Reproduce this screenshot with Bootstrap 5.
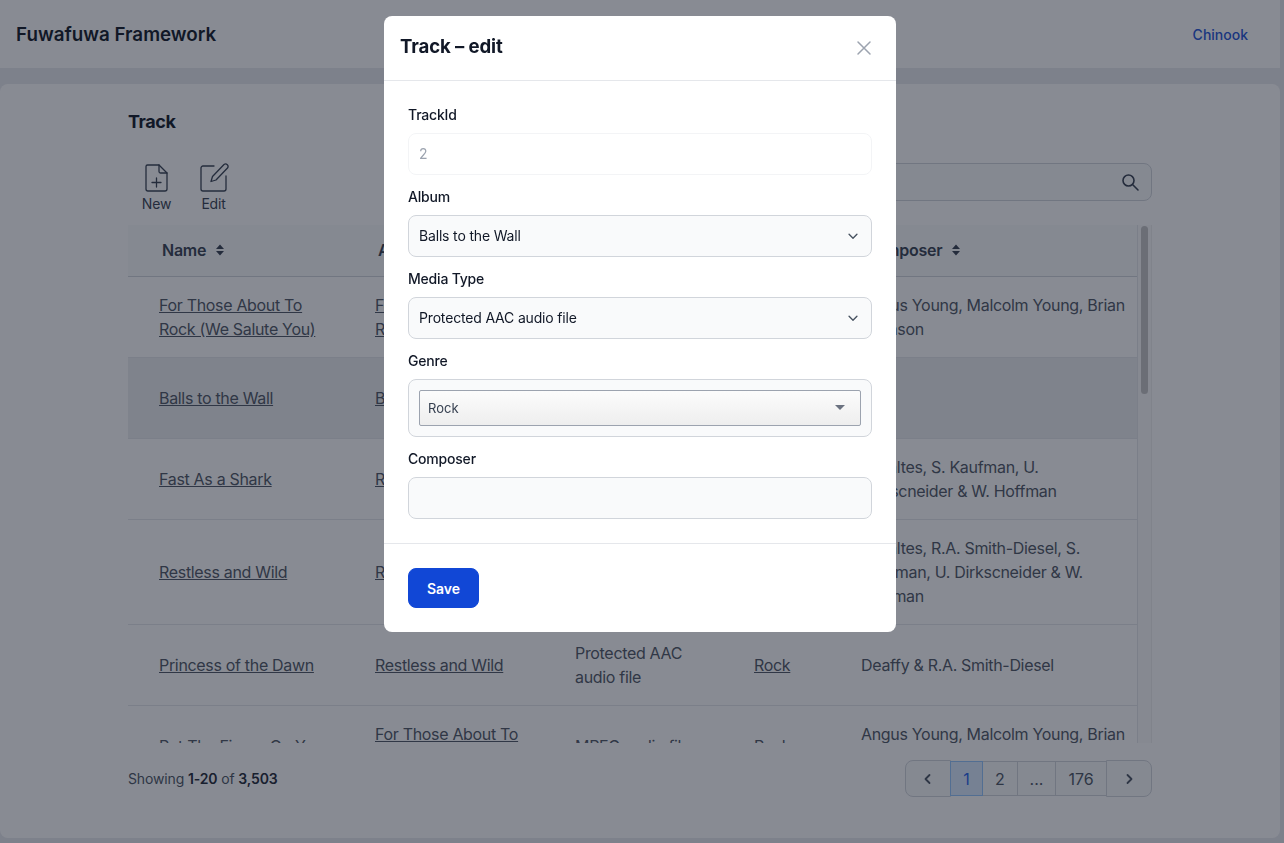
<!DOCTYPE html>
<html lang="en">
  <head>
    <meta charset="UTF-8" />
    <meta name="viewport" content="width=device-width, initial-scale=1.0" />
    <title>Fuwafuwa Framework</title>
    <link
      href="https://cdn.jsdelivr.net/npm/bootstrap@5.3.0/dist/css/bootstrap.min.css"
      rel="stylesheet"
    />
    <style>
      html,
      body {
        height: 100%;
        overflow: hidden;
      }
      body {
        background-color: #e9eaee;
        font-family: Inter, "Liberation Sans", sans-serif;
        color: #111827;
      }
      .top-bar {
        height: 68px;
        padding: 0 32px 0 16px;
        background-color: #fff;
        margin-right: 4px;
      }
      .brand-name {
        font-size: 18.8px;
        font-weight: 600;
        padding-top: 2px;
        color: #111827;
      }
      .app-link {
        font-size: 14px;
        font-weight: 500;
        color: #2454d6;
        text-decoration: none;
      }
      .main-panel {
        height: 754px;
        margin: 16px 4px 0 0;
        padding: 20px 128px 0;
        background-color: #fff;
        border-radius: 8px;
      }
      .panel-title {
        font-size: 18px;
        font-weight: 700;
        line-height: 36px;
        letter-spacing: -0.4px;
        margin: 0;
      }
      .tool-row {
        height: 62px;
        margin-top: 17px;
      }
      .tool-btn {
        width: 57px;
        font-size: 14px;
        line-height: 20px;
        letter-spacing: -0.2px;
        color: #374151;
        text-align: center;
      }
      .tool-btn svg {
        display: block;
        margin: 0 auto 1px;
      }
      .search-box {
        width: 400px;
        height: 38px;
        border: 1px solid #d1d5db;
        border-radius: 8px;
        background-color: #f9fafb;
        padding-right: 11px;
        color: #374151;
        margin-top: -12px;
      }
      .table-frame {
        height: 518px;
        margin-top: 6px;
      }
      .table-scroll {
        flex: 1 1 0;
        min-width: 0;
        overflow: hidden;
      }
      .bar-track {
        flex: 0 0 15px;
        padding: 1px 3px 0 3px;
        background-color: #fafafa;
        border-left: 1px solid #e5e7eb;
        border-right: 1px solid #eeeeee;
      }
      .bar-thumb {
        height: 168px;
        background-color: #c4c4c4;
        border-radius: 4px;
      }
      .track-table {
        --bs-table-color: #4f5764;
        --bs-table-border-color: #e5e7eb;
        font-size: 16px;
        line-height: 24px;
        letter-spacing: -0.32px;
        margin: 0;
        table-layout: fixed;
      }
      .track-table th {
        height: 51px;
        padding: 0 0 0 34px;
        --bs-table-bg: #f9fafb;
        font-weight: 600;
        letter-spacing: -0.25px;
        color: #374151;
        border-bottom: 1px solid #d1d5db;
        vertical-align: middle;
      }
      .track-table td {
        padding: 16px 10px 16px 31px;
        vertical-align: middle;
      }
      .track-table td a {
        color: #4f5764;
      }
      .track-table tr.row-picked td {
        --bs-table-bg: #edeef0;
      }
      .sort-mark {
        margin-left: 8px;
        vertical-align: 0;
      }
      .list-foot {
        height: 71px;
      }
      .show-count {
        font-size: 14px;
        letter-spacing: -0.14px;
        color: #4b5563;
      }
      .show-count b {
        font-weight: 600;
        color: #1f2937;
      }
      .page-nav {
        --bs-pagination-border-radius: 8px;
        align-items: center;
      }
      .page-nav .page-link {
        height: 35px;
        padding: 0;
        display: flex;
        align-items: center;
        justify-content: center;
        font-size: 16px;
        color: #4b5563;
        background-color: #f9fafb;
        border-color: #d1d5db;
      }
      .page-nav .page-item.active .page-link {
        background-color: #dbeafe;
        border-color: #93c5fd;
        color: #2563eb;
        z-index: 2;
      }
      .page-nav .page-link.page-wide {
        width: 46px;
        height: 37px;
      }
      .page-one {
        width: 33px;
      }
      .page-num {
        width: 36px;
      }
      .page-more {
        width: 39px;
      }
      .page-long {
        width: 52px;
      }
      .modal-backdrop.show {
        background-color: #111827;
        opacity: 0.5;
      }
      .edit-modal {
        padding-right: 4px;
      }
      .edit-dialog {
        max-width: 512px;
        margin: 16px auto;
      }
      .edit-dialog .modal-content {
        border: 0;
        border-radius: 8px;
      }
      .edit-dialog .modal-header {
        height: 65px;
        padding: 0 24px 0 16px;
        border-bottom: 1px solid #e5e7eb;
      }
      .edit-dialog .modal-title {
        font-size: 18.6px;
        font-weight: 700;
        letter-spacing: -0.1px;
        margin-top: -3px;
        color: #111827;
      }
      .close-x {
        background: none;
        border: 0;
        padding: 0;
        line-height: 0;
        color: #9ca3af;
      }
      .edit-dialog .modal-body {
        padding: 24px;
      }
      .field-label {
        display: block;
        height: 20px;
        margin-bottom: 8px;
        font-size: 14px;
        line-height: 20px;
        font-weight: 500;
        letter-spacing: -0.2px;
        color: #111827;
      }
      .field-gap {
        margin-bottom: 12px;
      }
      .edit-dialog .form-control,
      .edit-dialog .form-select {
        height: 42px;
        padding: 0 10px 2px;
        font-size: 14px;
        letter-spacing: -0.17px;
        color: #111827;
        background-color: #f9fafb;
        border: 1px solid #d1d5db;
        border-radius: 8px;
      }
      .edit-dialog .form-select {
        background-image: url("data:image/svg+xml,%3csvg xmlns='http://www.w3.org/2000/svg' viewBox='0 0 16 16'%3e%3cpath fill='none' stroke='%234b5563' stroke-linecap='round' stroke-linejoin='round' stroke-width='1.6' d='M3.5 6l4.5 4.5L12.500 6'/%3e%3c/svg%3e");
        background-position: right 11px center;
        background-size: 14px;
      }
      .edit-dialog .form-control:disabled {
        background-color: #fff;
        border-color: #f3f4f6;
        color: #9ca3af;
        opacity: 1;
      }
      .genre-wrap {
        height: 58px;
        padding: 10px;
        background-color: #f9fafb;
        border: 1px solid #d1d5db;
        border-radius: 8px;
      }
      .genre-pick {
        height: 36px;
        padding: 1px 8px 0;
        font-size: 13px;
        color: #374151;
        background: linear-gradient(#fcfcfc, #eeeeee);
        border: 1px solid #9ca3af;
        border-radius: 2px;
      }
      .genre-caret {
        width: 0;
        height: 0;
        margin-right: 7px;
        margin-bottom: 2px;
        border-left: 5px solid transparent;
        border-right: 5px solid transparent;
        border-top: 5px solid #6b7280;
      }
      .edit-dialog .modal-footer {
        padding: 24px;
        border-top: 1px solid #e5e7eb;
        justify-content: flex-start;
      }
      .save-btn {
        width: 71px;
        height: 40px;
        margin: 0;
        padding: 0;
        font-size: 14px;
        font-weight: 600;
        background-color: #1147d6;
        border-color: #1147d6;
        border-radius: 8px;
      }
    </style>
  </head>
  <body>
    <nav class="top-bar d-flex align-items-center justify-content-between">
      <span class="brand-name">Fuwafuwa Framework</span>
      <a class="app-link" href="#">Chinook</a>
    </nav>

    <main class="main-panel">
      <h2 class="panel-title">Track</h2>
      <div class="tool-row d-flex justify-content-between align-items-center">
        <div class="d-flex">
          <div class="tool-btn">
            <svg width="30" height="30" viewBox="0 0 30 30" fill="none" stroke="currentColor" stroke-width="1.3" stroke-linecap="round" stroke-linejoin="round">
              <path d="M4 3.500a1.500 1.500 0 0 1 1.500-1.500H17l8 8v16a2 2 0 0 1-2 2H6a2 2 0 0 1-2-2z" />
              <path d="M17 2v6.500a1.500 1.500 0 0 0 1.500 1.500H25" />
              <path d="M14.500 15v9M10 19.500h9" />
            </svg>
            New
          </div>
          <div class="tool-btn">
            <svg width="30" height="30" viewBox="0 0 30 30" fill="none" stroke="currentColor" stroke-width="1.3" stroke-linecap="round" stroke-linejoin="round">
              <path d="M15 3H4a2 2 0 0 0-2 2v21a2 2 0 0 0 2 2h21a2 2 0 0 0 2-2V13" />
              <path d="M25 1.500a2.500 2.500 0 0 1 3.500 3.500L17 17l-5 1.500 1.500-5z" />
            </svg>
            Edit
          </div>
        </div>
        <div class="search-box d-flex align-items-center justify-content-end">
          <svg width="20" height="20" viewBox="0 0 20 20" fill="none" stroke="currentColor" stroke-width="1.6" stroke-linecap="round">
            <circle cx="8.500" cy="8.500" r="5.500" />
            <path d="M12.800 12.800L18 18" />
          </svg>
        </div>
      </div>

      <div class="table-frame d-flex">
        <div class="table-scroll">
          <table class="table track-table">
            <colgroup>
              <col style="width: 216px" />
              <col style="width: 200px" />
              <col style="width: 179px" />
              <col style="width: 107px" />
              <col />
            </colgroup>
            <thead>
              <tr>
                <th>Name<svg class="sort-mark" width="12" height="12" viewBox="0 0 12 12" fill="currentColor"><path d="M6 0.500L10 5H2zM6 11.500L2 7h8z" /></svg></th>
                <th>Album<svg class="sort-mark" width="12" height="12" viewBox="0 0 12 12" fill="currentColor"><path d="M6 0.500L10 5H2zM6 11.500L2 7h8z" /></svg></th>
                <th>Media Type<svg class="sort-mark" width="12" height="12" viewBox="0 0 12 12" fill="currentColor"><path d="M6 0.500L10 5H2zM6 11.500L2 7h8z" /></svg></th>
                <th>Genre<svg class="sort-mark" width="12" height="12" viewBox="0 0 12 12" fill="currentColor"><path d="M6 0.500L10 5H2zM6 11.500L2 7h8z" /></svg></th>
                <th>Composer<svg class="sort-mark" width="12" height="12" viewBox="0 0 12 12" fill="currentColor"><path d="M6 0.500L10 5H2zM6 11.500L2 7h8z" /></svg></th>
              </tr>
            </thead>
            <tbody>
              <tr><td><a href="#">For Those About To Rock (We Salute You)</a></td><td><a href="#">For Those About To Rock We Salute You</a></td><td>MPEG audio file</td><td><a href="#">Rock</a></td><td>Angus Young, Malcolm Young, Brian Johnson</td></tr>
              <tr class="row-picked"><td><a href="#">Balls to the Wall</a></td><td><a href="#">Balls to the Wall</a></td><td>Protected AAC audio file</td><td><a href="#">Rock</a></td><td></td></tr>
              <tr><td><a href="#">Fast As a Shark</a></td><td><a href="#">Restless and Wild</a></td><td>Protected AAC audio file</td><td><a href="#">Rock</a></td><td>F. Baltes, S. Kaufman, U. Dirkscneider &amp; W. Hoffman</td></tr>
              <tr><td><a href="#">Restless and Wild</a></td><td><a href="#">Restless and Wild</a></td><td>Protected AAC audio file</td><td><a href="#">Rock</a></td><td>F. Baltes, R.A. Smith-Diesel, S. Kaufman, U. Dirkscneider &amp; W. Hoffman</td></tr>
              <tr><td><a href="#">Princess of the Dawn</a></td><td><a href="#">Restless and Wild</a></td><td>Protected AAC audio file</td><td><a href="#">Rock</a></td><td>Deaffy &amp; R.A. Smith-Diesel</td></tr>
              <tr><td><a href="#">Put The Finger On You</a></td><td><a href="#">For Those About To Rock We Salute You</a></td><td>MPEG audio file</td><td><a href="#">Rock</a></td><td>Angus Young, Malcolm Young, Brian Johnson</td></tr>
            </tbody>
          </table>
        </div>
        <div class="bar-track"><div class="bar-thumb"></div></div>
      </div>

      <div class="list-foot d-flex justify-content-between align-items-center">
        <span class="show-count">Showing <b>1-20</b> of <b>3,503</b></span>
        <ul class="pagination page-nav mb-0">
          <li class="page-item"><a class="page-link page-wide" href="#"><svg width="12" height="12" viewBox="0 0 12 12" fill="none" stroke="currentColor" stroke-width="1.800" stroke-linecap="round" stroke-linejoin="round"><path d="M7.500 2L3.500 6l4 4" /></svg></a></li>
          <li class="page-item active"><a class="page-link page-one" href="#">1</a></li>
          <li class="page-item"><a class="page-link page-num" href="#">2</a></li>
          <li class="page-item"><a class="page-link page-more" href="#">...</a></li>
          <li class="page-item"><a class="page-link page-long" href="#">176</a></li>
          <li class="page-item"><a class="page-link page-wide" href="#"><svg width="12" height="12" viewBox="0 0 12 12" fill="none" stroke="currentColor" stroke-width="1.800" stroke-linecap="round" stroke-linejoin="round"><path d="M4.500 2l4 4-4 4" /></svg></a></li>
        </ul>
      </div>
    </main>

    <div class="modal-backdrop show"></div>
    <div class="modal d-block edit-modal" tabindex="-1">
      <div class="modal-dialog edit-dialog">
        <div class="modal-content">
          <div class="modal-header justify-content-between">
            <h5 class="modal-title">Track – edit</h5>
            <button type="button" class="close-x" aria-label="Close">
              <svg width="16" height="16" viewBox="0 0 16 16" fill="none" stroke="currentColor" stroke-width="1.500" stroke-linecap="round"><path d="M2 2l12 12M14 2L2 14" /></svg>
            </button>
          </div>
          <div class="modal-body">
            <div class="field-gap">
              <label class="field-label">TrackId</label>
              <input class="form-control" type="text" value="2" disabled />
            </div>
            <div class="field-gap">
              <label class="field-label">Album</label>
              <select class="form-select"><option>Balls to the Wall</option></select>
            </div>
            <div class="field-gap">
              <label class="field-label">Media Type</label>
              <select class="form-select"><option>Protected AAC audio file</option></select>
            </div>
            <div class="field-gap">
              <label class="field-label">Genre</label>
              <div class="genre-wrap">
                <div class="genre-pick d-flex align-items-center justify-content-between">
                  <span>Rock</span>
                  <span class="genre-caret"></span>
                </div>
              </div>
            </div>
            <div>
              <label class="field-label">Composer</label>
              <input class="form-control" type="text" />
            </div>
          </div>
          <div class="modal-footer">
            <button type="button" class="btn btn-primary save-btn">Save</button>
          </div>
        </div>
      </div>
    </div>
    <script src="https://cdn.jsdelivr.net/npm/bootstrap@5.3.0/dist/js/bootstrap.bundle.min.js"></script>
  </body>
</html>
